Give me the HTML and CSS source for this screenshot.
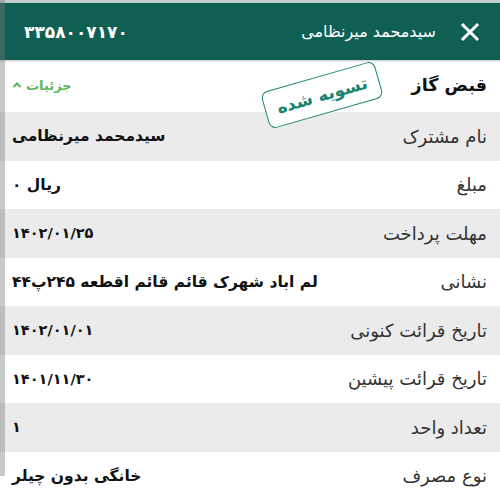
FILE: index.html
```html
<!DOCTYPE html>
<html lang="fa" dir="rtl">
<head>
<meta charset="utf-8">
<link rel="stylesheet" href="styles.css">
</head>
<body>
<div class="topline"></div>
<header class="bar">
  <svg class="close" width="20" height="20" viewBox="0 0 20 20"><path d="M3 3 L17 17 M17 3 L3 17" stroke="#fff" stroke-width="3" stroke-linecap="square"/></svg>
  <span class="name">سیدمحمد میرنظامی</span>
  <span class="code">۳۳۵۸۰۰۷۱۷۰</span>
</header>
<main class="sheet">
  <div class="title-row">
    <span class="title">قبض گاز</span>
    <span class="details">جزئیات <svg width="10" height="8" viewBox="0 0 10 8"><path d="M1.5 6 L5 2.5 L8.5 6" fill="none" stroke="#5cb85c" stroke-width="2.2"/></svg></span>
    <div class="stamp">تسویه شده</div>
  </div>
  <div class="row alt"><span class="label">نام مشترک</span><span class="value">سیدمحمد میرنظامی</span></div>
  <div class="row"><span class="label">مبلغ</span><span class="value">ریال ۰</span></div>
  <div class="row alt"><span class="label">مهلت پرداخت</span><span class="value num" dir="ltr">۱۴۰۲/۰۱/۲۵</span></div>
  <div class="row"><span class="label">نشانی</span><span class="value">لم اباد شهرک قائم قائم اقطعه ۲۴۵پ۴۴</span></div>
  <div class="row alt"><span class="label">تاریخ قرائت کنونی</span><span class="value num" dir="ltr">۱۴۰۲/۰۱/۰۱</span></div>
  <div class="row"><span class="label">تاریخ قرائت پیشین</span><span class="value num" dir="ltr">۱۴۰۱/۱۱/۳۰</span></div>
  <div class="row alt"><span class="label">تعداد واحد</span><span class="value num" dir="ltr">۱</span></div>
  <div class="row"><span class="label">نوع مصرف</span><span class="value">خانگی بدون چیلر</span></div>
</main>
<div class="edge"></div>
</body>
</html>
```
FILE: styles.css
```css
html, body {
  margin: 0;
  padding: 0;
  background: #fff;
  font-family: "DejaVu Sans", sans-serif;
  width: 500px;
  height: 500px;
  overflow: hidden;
  position: relative;
}
.topline {
  height: 3px;
  background: #c3ccca;
}
.bar {
  height: 57px;
  background: #0f5f53;
  display: flex;
  align-items: center;
  padding: 0 20px 0 24px;
  color: #fff;
  box-shadow: 0 1px 2px rgba(0,0,0,0.25);
  position: relative;
  z-index: 1;
}
.close {
  margin-left: 24px;
}
.name {
  font-size: 16px;
}
.code {
  margin-right: auto;
  font-size: 17px;
  font-weight: bold;
}
.sheet {
  display: flex;
  flex-direction: column;
}
.title-row {
  height: 52px;
  display: flex;
  align-items: center;
  padding: 0 13px 0 12px;
  position: relative;
}
.title {
  font-size: 17.5px;
  font-weight: bold;
  color: #111;
  margin-top: -2px;
}
.details {
  margin-right: auto;
  color: #5cb85c;
  font-size: 13px;
  font-weight: bold;
  display: flex;
  align-items: center;
  gap: 4px;
  margin-top: -2px;
}
.stamp {
  position: absolute;
  left: 263px;
  top: 16px;
  width: 118px;
  height: 38px;
  border: 1.5px solid #1a8473;
  border-radius: 7px;
  background: #fff;
  color: #1a8473;
  font-weight: bold;
  font-size: 17px;
  display: flex;
  align-items: center;
  justify-content: center;
  transform: rotate(-16deg);
  box-sizing: border-box;
  z-index: 2;
}
.row {
  height: 48.5px;
  display: flex;
  align-items: center;
  padding: 0 13px 0 12px;
  background: #fff;
}
.row.alt {
  background: #ebebeb;
}
.label {
  font-size: 18px;
  color: #333;
}
.value {
  margin-right: auto;
  font-size: 15.5px;
  font-weight: bold;
  color: #111;
}
.value.num {
  font-size: 14.5px;
}
.edge {
  position: absolute;
  left: 0;
  top: 0;
  width: 5px;
  height: 476px;
  background: rgba(120,120,120,0.4);
  z-index: 5;
}
```
